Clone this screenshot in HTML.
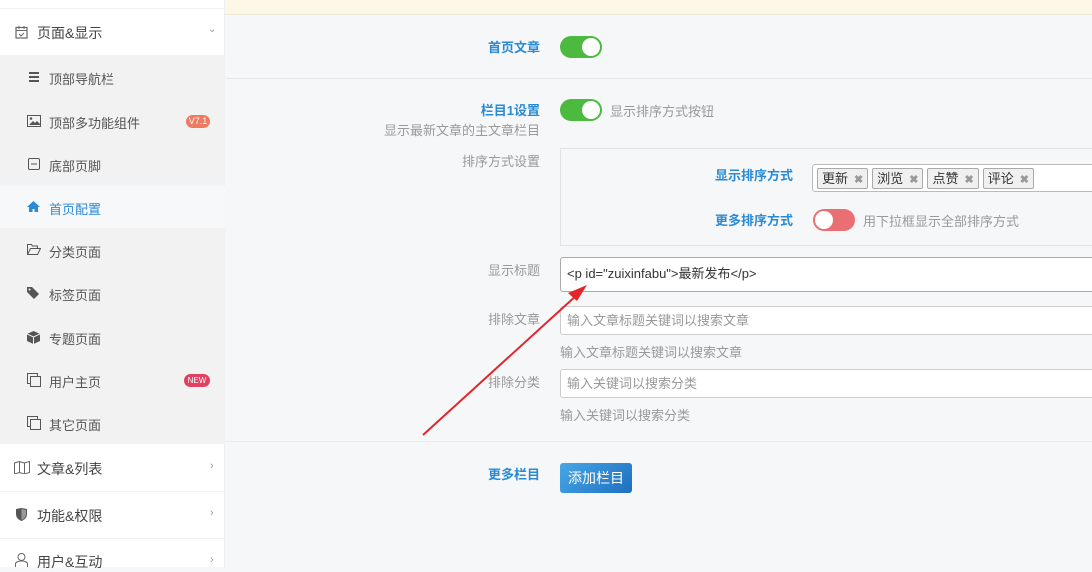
<!DOCTYPE html>
<html><head><meta charset="utf-8"><style>
*{margin:0;padding:0;box-sizing:border-box}
body{width:1092px;height:567px;overflow:hidden;background:#f6f7f9;font-family:"Liberation Sans","Noto Sans CJK SC",sans-serif;font-size:13px;color:#555;position:relative}
.a{position:absolute;white-space:nowrap}
.side{position:absolute;left:0;top:0;width:225px;height:567px;background:#fff;border-right:1px solid #eee}
.sub{position:absolute;left:0;top:55px;width:225px;height:389px;background:#f2f2f2}
.it{position:absolute;left:49px;font-size:13px;color:#555}
.ic{position:absolute;left:28px;width:12px;height:12px}
.lbl{position:absolute;text-align:right;width:200px;left:340px;font-size:13px;color:#999}
.blue{color:#2a8ad4;font-weight:bold}
.tog{position:absolute;width:42px;height:22px;border-radius:11px}
.tog i{position:absolute;top:2px;width:18px;height:18px;border-radius:50%;background:#fff}
.inp{position:absolute;left:560px;width:540px;background:#fff;border:1px solid #ccc;border-radius:3px;font-size:13px;padding-left:6px}
.tag{display:inline-block;border:1px solid #aaa;background:#f0f0f0;border-radius:2px;height:21px;line-height:19px;padding:0 4px;margin-right:4px;font-size:13px;color:#333}
.tag b{color:#999;font-size:11px;margin-left:6px}
</style></head><body>
<div class="a" style="left:225px;top:0;width:867px;height:15px;background:#fdf7e8;border-bottom:1px solid #efe9da"></div>
<div class="side">
<div class="a" style="left:0;top:0;width:225px;height:9px;border-bottom:1px solid #f0f0f0"></div>
<svg class="a" style="left:15px;top:25px" width="13" height="14" viewBox="0 0 13 14"><rect x="1" y="2.5" width="11" height="10.5" fill="none" stroke="#666" stroke-width="1.2"/><line x1="1" y1="5.5" x2="12" y2="5.5" stroke="#666"/><path d="M4 1v3M9 1v3M4 9l2 2 3-3" stroke="#666" fill="none"/></svg>
<div class="a" style="left:37px;top:23px;font-size:14px;color:#444">页面&amp;显示</div>
<div class="a" style="left:208px;top:24px;font-size:10px;color:#999">⌄</div>
<div class="sub"></div>
<div class="a" style="left:0;top:186px;width:225px;height:42px;background:#f7f8fa"></div>
<div class="a" style="left:29px;top:72px;width:10px;height:2px;background:#555;box-shadow:0 4px 0 #555,0 8px 0 #555"></div>
<div class="it" style="top:69px">顶部导航栏</div>
<svg class="a" style="left:27px;top:115px" width="14" height="12"><rect x=".5" y=".5" width="13" height="11" fill="none" stroke="#555"/><path d="M2 10l4-4 2 2 2-2 3 3v1z" fill="#555"/><circle cx="4" cy="3.5" r="1.3" fill="#555"/></svg>
<div class="it" style="top:113px">顶部多功能组件</div>
<div class="a" style="left:186px;top:115px;width:24px;height:13px;border-radius:7px;background:#ee7a62;color:#fff;font-size:9px;text-align:center;line-height:13px">V7.1</div>
<svg class="a" style="left:28px;top:158px" width="12" height="12"><rect x=".5" y=".5" width="11" height="11" rx="1.5" fill="none" stroke="#555"/><line x1="3" y1="6" x2="9" y2="6" stroke="#555"/></svg>
<div class="it" style="top:156px">底部页脚</div>
<svg class="a" style="left:27px;top:201px" width="13" height="11"><path d="M6.5 0L0 6h2v5h3.5V8h2v3H11V6h2z" fill="#2a8ad4"/></svg>
<div class="it" style="top:199px;color:#2a8ad4">首页配置</div>
<svg class="a" style="left:27px;top:244px" width="14" height="11"><path d="M.5 10.5V.5h4l1 1.5h5v2M.5 10.5l3-6h10l-3 6z" fill="none" stroke="#555"/></svg>
<div class="it" style="top:242px">分类页面</div>
<svg class="a" style="left:27px;top:287px" width="14" height="13"><path d="M0 0h5l7 7-5 5-7-7z" fill="#555"/><circle cx="2.5" cy="2.5" r="1" fill="#f2f2f2"/></svg>
<div class="it" style="top:285px">标签页面</div>
<svg class="a" style="left:27px;top:331px" width="13" height="13"><path d="M6.5 0L13 3v7l-6.5 3L0 10V3z" fill="#555"/><path d="M0 3l6.5 3L13 3M6.5 6v7" stroke="#f2f2f2" fill="none"/></svg>
<div class="it" style="top:329px">专题页面</div>
<svg class="a" style="left:27px;top:373px" width="14" height="14"><path d="M3 10.5H.5V.5h10V3" fill="none" stroke="#555"/><rect x="3.5" y="3.5" width="10" height="10" fill="none" stroke="#555"/></svg>
<div class="it" style="top:372px">用户主页</div>
<div class="a" style="left:184px;top:374px;width:26px;height:13px;border-radius:7px;background:#e23f62;color:#fff;font-size:8px;text-align:center;line-height:13px">NEW</div>
<svg class="a" style="left:27px;top:416px" width="14" height="14"><path d="M3 10.5H.5V.5h10V3" fill="none" stroke="#555"/><rect x="3.5" y="3.5" width="10" height="10" fill="none" stroke="#555"/></svg>
<div class="it" style="top:415px">其它页面</div>
<div class="a" style="left:0;top:491px;width:225px;border-top:1px solid #f0f0f0"></div>
<div class="a" style="left:0;top:538px;width:225px;border-top:1px solid #f0f0f0"></div>
<svg class="a" style="left:14px;top:461px" width="16" height="13"><path d="M.5 2l5-1.5 5 1.5 5-1.5v11l-5 1.5-5-1.5-5 1.5zM5.5.5v11M10.5 2v11" fill="none" stroke="#666"/></svg>
<div class="a" style="left:37px;top:459px;font-size:14px;color:#444">文章&amp;列表</div>
<div class="a" style="left:210px;top:460px;font-size:11px;color:#999">›</div>
<svg class="a" style="left:16px;top:508px" width="11" height="13"><path d="M0 1l5.5-1L11 1v5c0 4-3 6-5.5 7C3 12 0 10 0 6z" fill="#555"/><path d="M5.5 1v11C8 11 10 9 10 6V2z" fill="#999"/></svg>
<div class="a" style="left:37px;top:506px;font-size:14px;color:#444">功能&amp;权限</div>
<div class="a" style="left:210px;top:507px;font-size:11px;color:#999">›</div>
<svg class="a" style="left:15px;top:553px" width="13" height="14"><circle cx="6.5" cy="4" r="3.5" fill="none" stroke="#666"/><path d="M.5 14v-3c0-2 3-3 6-3s6 1 6 3v3" fill="none" stroke="#666"/></svg>
<div class="a" style="left:37px;top:552px;font-size:14px;color:#444">用户&amp;互动</div>
<div class="a" style="left:210px;top:554px;font-size:11px;color:#999">›</div>
</div>

<div class="a" style="left:226px;top:78px;width:866px;border-top:1px solid #e8e8e8"></div>
<div class="a" style="left:226px;top:441px;width:866px;border-top:1px solid #ececec"></div>

<div class="lbl blue" style="top:37px">首页文章</div>
<div class="tog" style="left:560px;top:36px;background:#4bba3e"><i style="right:2px"></i></div>

<div class="lbl blue" style="top:100px">栏目1设置</div>
<div class="lbl" style="top:120px">显示最新文章的主文章栏目</div>
<div class="tog" style="left:560px;top:99px;background:#4bba3e"><i style="right:2px"></i></div>
<div class="a" style="left:610px;top:101px;color:#999">显示排序方式按钮</div>

<div class="lbl" style="top:151px">排序方式设置</div>
<div class="a" style="left:560px;top:148px;width:540px;height:98px;border:1px solid #e3e3e3;background:#f6f7f9"></div>
<div class="a blue" style="left:715px;top:165px">显示排序方式</div>
<div class="a" style="left:812px;top:164px;width:290px;height:28px;border:1px solid #bbb;border-radius:3px;background:#fff;padding:3px 0 0 4px"><span class="tag">更新<b>✖</b></span><span class="tag">浏览<b>✖</b></span><span class="tag">点赞<b>✖</b></span><span class="tag">评论<b>✖</b></span></div>
<div class="a blue" style="left:715px;top:210px">更多排序方式</div>
<div class="tog" style="left:813px;top:209px;background:#ea6f72"><i style="left:2px"></i></div>
<div class="a" style="left:863px;top:211px;color:#999">用下拉框显示全部排序方式</div>

<div class="lbl" style="top:260px">显示标题</div>
<div class="inp" style="top:257px;height:35px;padding-top:5px;color:#333;border-color:#aaa">&lt;p id="zuixinfabu"&gt;最新发布&lt;/p&gt;</div>

<div class="lbl" style="top:309px">排除文章</div>
<div class="inp" style="top:306px;height:29px;line-height:27px;color:#999">输入文章标题关键词以搜索文章</div>
<div class="a" style="left:560px;top:342px;color:#999">输入文章标题关键词以搜索文章</div>

<div class="lbl" style="top:372px">排除分类</div>
<div class="inp" style="top:369px;height:29px;line-height:27px;color:#999">输入关键词以搜索分类</div>
<div class="a" style="left:560px;top:405px;color:#999">输入关键词以搜索分类</div>

<div class="lbl blue" style="top:464px">更多栏目</div>
<div class="a" style="left:560px;top:463px;width:72px;height:30px;border-radius:3px;background:linear-gradient(135deg,#47a7e6,#1f6fbf);color:#fff;font-size:14px;text-align:center;line-height:30px">添加栏目</div>

<svg class="a" style="left:0;top:0" width="1092" height="567"><line x1="423" y1="435" x2="578" y2="294" stroke="#e3262a" stroke-width="2"/><path d="M587 285L568 293L577 301Z" fill="#e3262a"/></svg>
</body></html>
